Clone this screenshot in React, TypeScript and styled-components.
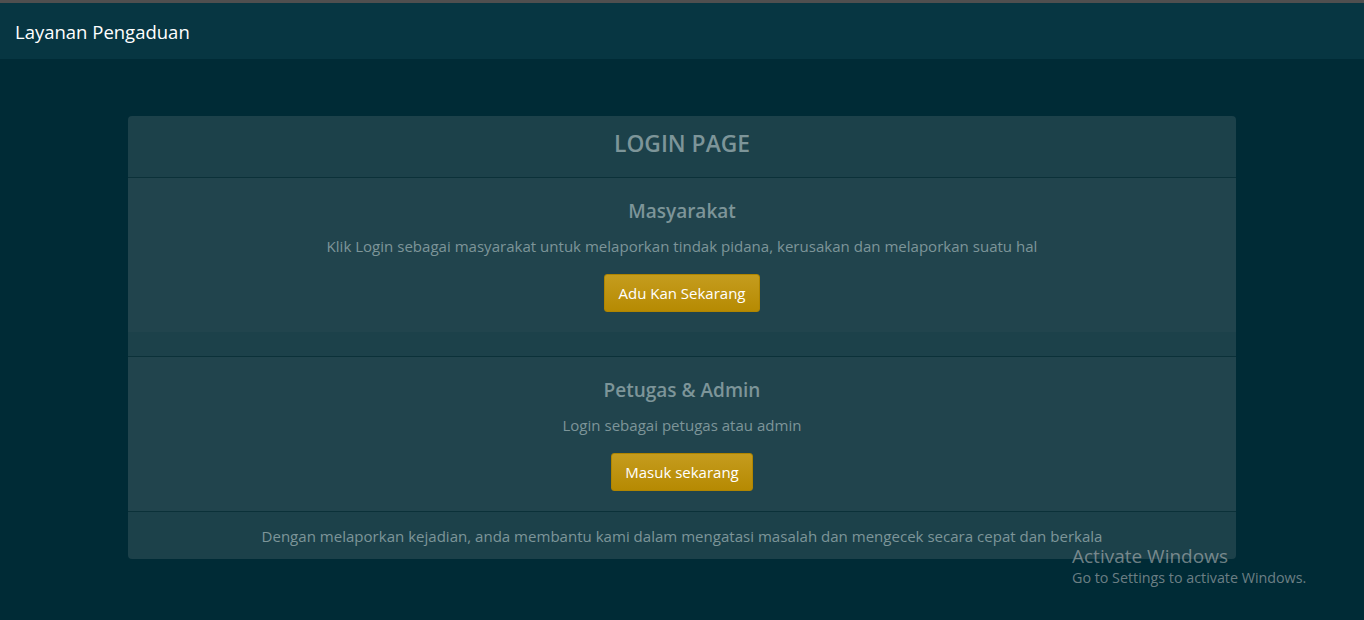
import React from "react";
import styled, { createGlobalStyle } from "styled-components";

const Global = createGlobalStyle`
  html, body { margin: 0; padding: 0; }
  body {
    background: #002b36;
    font-family: "Open Sans", "Noto Sans", sans-serif;
    color: #839496;
    min-height: 620px;
  }
`;

const Page = styled.div`
  min-height: 620px;
  background: #002b36;
  border-top: 3px solid #4f4f4f;
  box-sizing: border-box;
  position: relative;
  overflow: hidden;
`;

const Navbar = styled.nav`
  height: 56px;
  background: #073642;
  display: flex;
  align-items: center;
  padding: 0 15px;
`;

const Brand = styled.span`
  color: #ffffff;
  font-size: 18.5px;
  padding-top: 1px;
`;

const Container = styled.div`
  width: 1108px;
  margin: 57px auto 0;
`;

const Card = styled.div`
  background: #1c414a;
  border-radius: 4px;
  overflow: hidden;
  text-align: center;
`;

const CardHeader = styled.div`
  padding: 10px 0 15px;
  border-bottom: 1px solid #0b3139;
`;

const HeaderTitle = styled.h3`
  margin: 0;
  font-size: 22.8px;
  line-height: 36px;
  font-weight: 600;
  color: #7d9599;
`;

const Section = styled.div<{ $gap?: boolean }>`
  background: #21444d;
  padding: 21px 20px 20px;
  ${(p) => (p.$gap ? "margin-bottom: 24px;" : "")}
`;

const Divider = styled.div`
  height: 1px;
  background: #0b3139;
`;

const Title = styled.h5`
  margin: 0 0 11px;
  font-size: 19px;
  line-height: 24px;
  font-weight: 600;
  color: #7d9599;
`;

const Text = styled.p`
  margin: 0 0 16px;
  font-size: 15.05px;
  line-height: 24px;
  color: #7d9599;
`;

const Button = styled.button`
  height: 38px;
  padding: 0 13px;
  border: 1px solid #b08500;
  border-radius: 3px;
  background: linear-gradient(#c59c1e, #b68a02);
  color: #ffffff;
  font-family: inherit;
  font-size: 15px;
  cursor: pointer;
`;

const Footer = styled.div`
  padding: 12px 0 11px;
  font-size: 15.05px;
  line-height: 24px;
  color: #7d9599;
`;

const Watermark = styled.div`
  position: absolute;
  left: 1072px;
  top: 540px;
  color: rgba(200, 200, 200, 0.55);
  font-family: "Open Sans", "Noto Sans", sans-serif;
`;

const WmTitle = styled.div`
  font-size: 19px;
  line-height: 26px;
`;

const WmSub = styled.div`
  font-size: 14.3px;
  line-height: 18px;
`;

export default function App() {
  return (
    <Page>
      <Global />
      <Navbar>
        <Brand>Layanan Pengaduan</Brand>
      </Navbar>
      <Container>
        <Card>
          <CardHeader>
            <HeaderTitle>LOGIN PAGE</HeaderTitle>
          </CardHeader>
          <Section $gap>
            <Title>Masyarakat</Title>
            <Text>
              Klik Login sebagai masyarakat untuk melaporkan tindak pidana, kerusakan dan melaporkan suatu hal
            </Text>
            <Button>Adu Kan Sekarang</Button>
          </Section>
          <Divider />
          <Section>
            <Title>Petugas &amp; Admin</Title>
            <Text>Login sebagai petugas atau admin</Text>
            <Button>Masuk sekarang</Button>
          </Section>
          <Divider />
          <Footer>
            Dengan melaporkan kejadian, anda membantu kami dalam mengatasi masalah dan mengecek secara cepat dan berkala
          </Footer>
        </Card>
      </Container>
      <Watermark>
        <WmTitle>Activate Windows</WmTitle>
        <WmSub>Go to Settings to activate Windows.</WmSub>
      </Watermark>
    </Page>
  );
}
